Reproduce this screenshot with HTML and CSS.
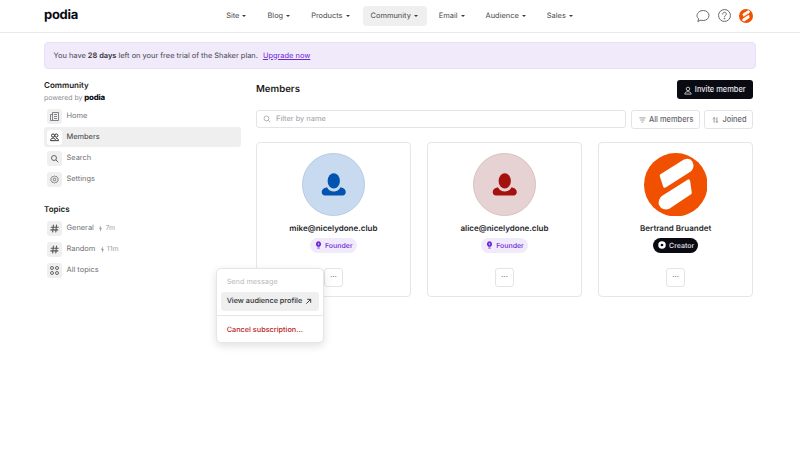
FILE: index.html
```html
<!DOCTYPE html>
<html lang="en">
<head>
<meta charset="utf-8">
<title>Members - Podia</title>
<link rel="stylesheet" href="styles.css">
</head>
<body>
<svg class="defs" width="0" height="0" aria-hidden="true">
  <defs>
    <symbol id="logo-s" viewBox="0 0 190 190">
      <circle cx="95" cy="95" r="95" fill="#f05000"/>
      <path d="M52 68 122 24Q140 18 143 36 144 46 136 52L62 99Z M133 84 138 119 74 162Q56 168 49 152 48 140 56 133Z" fill="#fff" stroke="#fff" stroke-width="10" stroke-linejoin="round"/>
    </symbol>
    <symbol id="person" viewBox="0 0 64 64">
      <ellipse cx="32" cy="28" rx="6.400" ry="8"/>
      <path d="M25 34.500c1.500 3 4 4.500 7 4.500s5.500-1.500 7-4.500l2.500 1c2 .8 3 2.300 3 4.300 0 2-1.300 3.400-3.300 3.400H22.800c-2 0-3.300-1.400-3.300-3.400 0-2 1-3.500 3-4.300Z"/>
    </symbol>
    <symbol id="bulb" viewBox="0 0 10 12">
      <path d="M5 .5a4 4 0 0 1 2.300 7.200V8.800H2.700V7.700A4 4 0 0 1 5 .5Z"/>
      <rect x="3.200" y="9.600" width="3.600" height="1.700" rx=".8"/>
      <circle cx="5" cy="4.500" r="1.200" fill="#f1eafb"/>
    </symbol>
    <symbol id="bolt" viewBox="0 0 6 10">
      <path d="M3.500.5 1 5.500h1.700L2.300 9.500 5 4.500H3.200Z"/>
    </symbol>
    <symbol id="hash" viewBox="0 0 15 15">
      <path d="M6.400 4 5.700 11M9.500 4 8.800 11M4.200 6.200h7M3.800 8.900h7" fill="none" stroke="#55555c" stroke-width="1.100" stroke-linecap="round"/>
    </symbol>
  </defs>
</svg>

<header class="topbar">
  <a class="logo">podia</a>
  <nav class="mainnav">
    <a class="navitem">Site<i class="caret"></i></a>
    <a class="navitem">Blog<i class="caret"></i></a>
    <a class="navitem">Products<i class="caret"></i></a>
    <a class="navitem is-current">Community<i class="caret"></i></a>
    <a class="navitem">Email<i class="caret"></i></a>
    <a class="navitem">Audience<i class="caret"></i></a>
    <a class="navitem">Sales<i class="caret"></i></a>
  </nav>
  <div class="tools">
    <svg class="tool-chat" viewBox="0 0 14 14" fill="none" stroke="#66666d" stroke-width="1"><path d="M7.300 1.500c3.200 0 5.700 2.200 5.700 5s-2.500 5-5.700 5c-.8 0-1.600-.1-2.300-.4L1.800 12.500l.9-2.700C1.600 8.900 1 7.800 1 6.500c0-2.800 3-5 6.300-5Z"/></svg>
    <svg class="tool-help" viewBox="0 0 12 12" fill="none" stroke="#66666d" stroke-width=".9"><circle cx="6" cy="6" r="5.500"/><path d="M4.300 4.700c0-1 .8-1.700 1.700-1.700s1.700.7 1.700 1.600c0 1.300-1.700 1.400-1.700 2.700" stroke-linecap="round"/><circle cx="6" cy="8.900" r=".35"/></svg>
    <svg class="tool-avatar"><use href="#logo-s"/></svg>
  </div>
</header>

<section class="notice"><span>You have <b>28 days</b> left on your free trial of the Shaker plan.</span><a class="notice-link">Upgrade now</a></section>

<div class="layout">
  <aside class="side">
    <div class="side-title">Community</div>
    <div class="powered">powered by <b>podia</b></div>
    <ul class="side-list">
      <li class="side-item"><span class="ibox"><svg viewBox="0 0 15 15" fill="none" stroke="#66666d" stroke-width=".8"><path d="M5.500 3.500h6v8h-6zM5.500 5.500h-2v6h2M7 5.500h3M7 7.500h3M7 9.500h3"/></svg></span>Home</li>
      <li class="side-item is-active"><span class="ibox"><svg viewBox="-2 -2 19 19" fill="none" stroke="#27272a" stroke-width="1.200"><circle cx="5.700" cy="5" r="2"/><circle cx="9.800" cy="5" r="2"/><path d="M2.500 11.500c0-2 1.300-3.200 3.200-3.200s3.200 1.200 3.200 3.200ZM9.500 8.300c1.800 0 3 1.200 3 3.200h-3"/></svg></span>Members</li>
      <li class="side-item"><span class="ibox"><svg viewBox="0 0 15 15" fill="none" stroke="#66666d" stroke-width="1"><circle cx="7" cy="7" r="2.500"/><path d="M9 9l2 2" stroke-linecap="round"/></svg></span>Search</li>
      <li class="side-item"><span class="ibox"><svg viewBox="-2.500 -2.500 20 20" fill="none" stroke="#66666d" stroke-width="1.100"><circle cx="7.500" cy="7.500" r="1.700"/><path d="M7.500 2.800l1.300.9 1.600-.1.700 1.400 1.300 1-.4 1.500.4 1.500-1.300 1-.7 1.400-1.600-.1-1.300.9-1.300-.9-1.600.1-.7-1.400-1.300-1 .4-1.500-.4-1.500 1.300-1 .7-1.400 1.600.1Z"/></svg></span>Settings</li>
    </ul>
    <div class="side-title topics-title">Topics</div>
    <ul class="side-list">
      <li class="side-item"><span class="ibox"><svg><use href="#hash"/></svg></span>General<span class="age"><svg class="bolt"><use href="#bolt"/></svg>7m</span></li>
      <li class="side-item"><span class="ibox"><svg><use href="#hash"/></svg></span>Random<span class="age"><svg class="bolt"><use href="#bolt"/></svg>11m</span></li>
      <li class="side-item"><span class="ibox"><svg viewBox="0 0 15 15" fill="none" stroke="#66666d" stroke-width="1"><circle cx="5" cy="5" r="1.500"/><circle cx="10" cy="5" r="1.500"/><circle cx="5" cy="10" r="1.500"/><circle cx="10" cy="10" r="1.500"/></svg></span>All topics</li>
    </ul>
  </aside>

  <main class="content">
    <div class="content-head">
      <h1 class="page-title">Members</h1>
      <button class="btn-primary"><svg viewBox="0 0 10 10" fill="none" stroke="#fff" stroke-width=".9"><circle cx="5" cy="3" r="2.200"/><path d="M1 9.500c0-2 1.700-3 4-3s4 1 4 3Z"/></svg>Invite member</button>
    </div>
    <div class="filters">
      <label class="search"><svg viewBox="0 0 10 10" fill="none" stroke="#a1a1aa" stroke-width="1"><circle cx="4.300" cy="4.300" r="3"/><path d="M6.600 6.600 9 9"/></svg><span>Filter by name</span></label>
      <button class="btn-outline"><svg viewBox="0 0 10 10" fill="none" stroke="#66666d" stroke-width=".9"><path d="M.5 2h9M2 5h6M3.700 8h2.600"/></svg>All members</button>
      <button class="btn-outline"><svg viewBox="0 0 10 10" fill="none" stroke="#66666d" stroke-width=".9"><path d="M3 9V1.500M1 3.500l2-2 2 2M7 1v7.500M5.500 6.800 7 8.500l1.500-1.700"/></svg>Joined</button>
    </div>
    <div class="cards">
      <article class="card">
        <div class="avatar avatar-blue"><svg><use href="#person"/></svg></div>
        <div class="name">mike@nicelydone.club</div>
        <span class="badge badge-founder"><svg><use href="#bulb"/></svg>Founder</span>
        <button class="more">···</button>
      </article>
      <article class="card">
        <div class="avatar avatar-red"><svg><use href="#person"/></svg></div>
        <div class="name">alice@nicelydone.club</div>
        <span class="badge badge-founder"><svg><use href="#bulb"/></svg>Founder</span>
        <button class="more">···</button>
      </article>
      <article class="card">
        <svg class="avatar-logo"><use href="#logo-s"/></svg>
        <div class="name">Bertrand Bruandet</div>
        <span class="badge badge-creator"><svg viewBox="0 0 10 10"><circle cx="5" cy="5" r="4.700" fill="#fff"/><circle cx="5" cy="5" r="1.700" fill="#0a0a12"/></svg>Creator</span>
        <button class="more">···</button>
      </article>
    </div>
  </main>
</div>

<div class="menu">
  <div class="menu-item is-disabled">Send message</div>
  <div class="menu-item is-hover">View audience profile <svg viewBox="0 0 8 8" fill="none" stroke="#27272a" stroke-width="1"><path d="M1.500 6.500 6.500 1.500M2.500 1.500h4v4"/></svg></div>
  <hr class="menu-sep">
  <div class="menu-item is-danger">Cancel subscription...</div>
</div>
</body>
</html>
```
FILE: styles.css
```css
* { box-sizing: border-box; }
html, body { margin: 0; padding: 0; }
body {
  width: 800px;
  height: 470px;
  overflow: hidden;
  background: #fff;
  color: #27272a;
  font-family: Inter, "Liberation Sans", sans-serif;
  font-size: 7.450px;
  line-height: 1.2;
  position: relative;
  text-rendering: geometricPrecision;
}
.defs { position: absolute; }
ul { list-style: none; margin: 0; padding: 0; }
button { font: inherit; cursor: default; }

.topbar {
  display: grid;
  grid-template-columns: 1fr auto 1fr;
  align-items: center;
  height: 33px;
  padding: 0 44px 1px;
  border-bottom: 1px solid #e9e9eb;
}
.logo { font-size: 13px; font-weight: 700; color: #0a0a12; letter-spacing: -.3px; }
.mainnav { display: flex; gap: 4px; }
.navitem {
  display: flex;
  align-items: center;
  height: 20px;
  padding: 1px 9px 0 8px;
  border-radius: 4px;
  color: #48484f;
}
.navitem.is-current { background: #efefef; }
.caret {
  width: 0;
  height: 0;
  margin-left: 3px;
  border: 2px solid transparent;
  border-top: 2.500px solid #3a3a40;
  border-bottom: 0;
}
.tools { display: flex; justify-content: flex-end; align-items: center; gap: 8px; padding-right: 3.500px; }
.tool-chat { width: 14px; height: 14px; }
.tool-help { width: 13px; height: 13px; }
.tool-avatar { width: 14px; height: 14px; }

.notice {
  display: flex;
  gap: 5px;
  align-items: center;
  height: 27px;
  margin: 9px 44px 0;
  padding: 1px 8.500px 0;
  background: #f0eafa;
  border: 1px solid #e9e0f8;
  border-radius: 4px;
  color: #46464e;
}
.notice b { font-weight: 600; color: #303036; }
.notice-link { color: #6d28d9; text-decoration: underline; }

.layout {
  display: flex;
  padding: 11px 47px 0 44px;
  gap: 15px;
}
.side { width: 197px; flex: none; }
.side-title { font-weight: 600; color: #1c1c20; line-height: 11px; font-size: 8px; }
.powered { margin-top: 1px; color: #8a8a92; line-height: 11px; font-size: 6.900px; }
.powered b { color: #0a0a12; font-weight: 800; font-size: 7.800px; letter-spacing: -.2px; }
.side-list { display: flex; flex-direction: column; gap: 1px; margin-top: 3px; }
.side-item {
  display: flex;
  align-items: center;
  gap: 4.500px;
  height: 20px;
  padding: 1px 0 0 3px;
  border-radius: 3px;
  color: #6f6f76;
}
.side-item.is-active { background: #efefef; color: #3a3a40; }
.ibox {
  display: flex;
  width: 15px;
  height: 15px;
  background: #efefef;
  border-radius: 3px;
}
.is-active .ibox { background: #fff; }
.ibox svg { width: 15px; height: 15px; }
.topics-title { margin-top: 15px; margin-bottom: 3px; }
.age { display: flex; align-items: center; gap: 2px; color: #a1a1a8; font-size: 6.900px; }
.bolt { width: 5px; height: 7px; fill: #8a8a92; }

.content { flex: 1; min-width: 0; }
.content-head {
  display: flex;
  justify-content: space-between;
  align-items: center;
  height: 19px;
}
.page-title { margin: 0; padding-top: 1px; font-size: 9.600px; font-weight: 600; color: #1c1c20; }
.btn-primary {
  display: flex;
  align-items: center;
  justify-content: center;
  gap: 2.500px;
  width: 76px;
  height: 19px;
  padding: 1px 0 0;
  background: #0a0a12;
  color: #e8e8ea;
  border: 0;
  border-radius: 3px;
  font-weight: 500;
}
.btn-primary svg { width: 8px; height: 9px; }
.filters { display: flex; gap: 4.500px; margin-top: 11px; }
.search {
  display: flex;
  align-items: center;
  gap: 5px;
  flex: 1;
  height: 18px;
  padding-left: 6px;
  border: 1px solid #e4e4e7;
  border-radius: 3px;
  color: #9d9da4;
}
.search svg { width: 8px; height: 8px; }
.btn-outline {
  display: flex;
  align-items: center;
  gap: 3px;
  height: 19px;
  padding: 1px 5.500px 0 7px;
  background: #fff;
  border: 1px solid #e4e4e7;
  border-radius: 3px;
  color: #66666d;
  font-weight: 500;
}
.btn-outline svg { width: 7px; height: 8px; }
.cards { display: grid; grid-template-columns: repeat(3, 154.700px); justify-content: space-between; margin-top: 13px; }
.card {
  display: flex;
  flex-direction: column;
  align-items: center;
  height: 155px;
  padding-top: 9.500px;
  border: 1px solid #e6e6e8;
  border-radius: 4px;
}
.avatar {
  display: flex;
  width: 63.500px;
  height: 63.500px;
  border-radius: 50%;
}
.avatar svg { width: 61.500px; height: 61.500px; }
.avatar-blue { background: #c8daf0; border: 1px solid #b8cbe3; fill: #0353b0; }
.avatar-red { background: #e6d2d2; border: 1px solid #d8c2c2; fill: #a5120e; }
.avatar-logo { width: 63.500px; height: 63.500px; }
.name { margin-top: 6.500px; font-weight: 600; font-size: 8px; color: #27272a; line-height: 11px; }
.badge {
  display: flex;
  align-items: center;
  gap: 3px;
  height: 15px;
  margin-top: 4px;
  padding: 0 4px 0 5px;
  border-radius: 8px;
  line-height: 1;
  font-size: 7px;
  font-weight: 500;
}
.badge svg { width: 7px; height: 8px; }
.badge-founder { background: #f1eafb; color: #6d28d9; fill: #6d28d9; }
.badge-creator { background: #0a0a12; color: #e8e8ea; }
.badge-creator svg { width: 8px; height: 8px; }
.more {
  width: 19px;
  height: 19px;
  margin-top: 15px;
  padding: 0;
  background: #fff;
  border: 1px solid #e4e4e7;
  border-radius: 3px;
  color: #66666d;
  font-size: 8px;
}

.menu {
  position: absolute;
  left: 215.700px;
  top: 267.500px;
  width: 108.300px;
  height: 75.500px;
  padding: 4px;
  background: #fff;
  border: 1px solid #e6e6e8;
  border-radius: 5px;
  box-shadow: 0 3px 8px rgba(0, 0, 0, .12);
  font-size: 7.300px;
}
.menu-item {
  display: flex;
  align-items: center;
  gap: 3px;
  height: 19px;
  padding: 1px 6px 0;
  border-radius: 3px;
  white-space: nowrap;
}
.menu-item svg { width: 7px; height: 7px; }
.is-disabled { color: #b9b9bf; }
.is-hover { background: #efefef; color: #2e2e33; font-weight: 500; }
.is-danger { color: #b91c1c; font-weight: 500; }
.menu-sep { height: 1px; margin: 4.500px -4px 4px; background: #e6e6e8; border: 0; }
```
